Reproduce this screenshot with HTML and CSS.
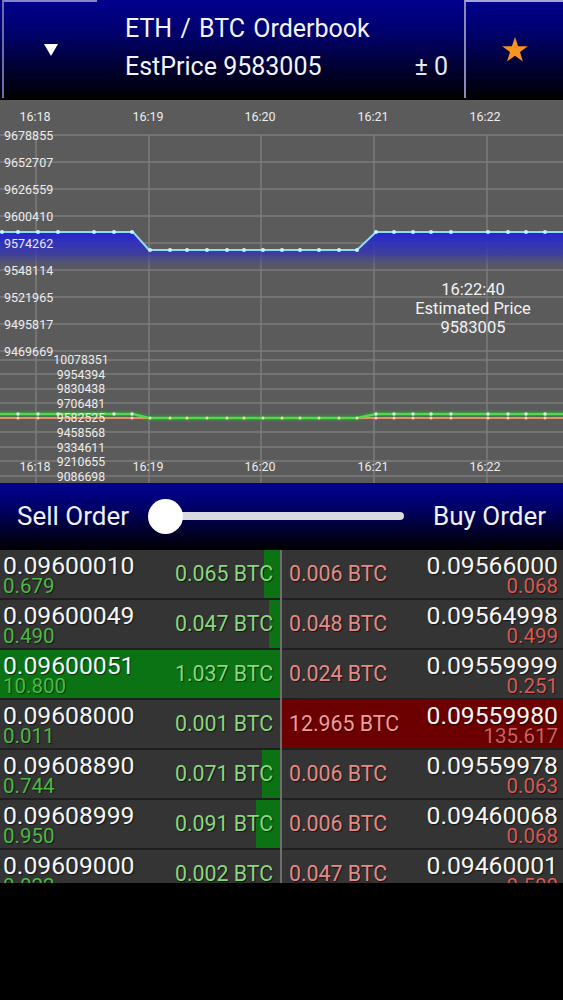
FILE: index.html
```html
<!DOCTYPE html>
<html>
<head>
<meta charset="utf-8">
<title>ETH / BTC Orderbook</title>
<link rel="stylesheet" href="styles.css">
</head>
<body>
<div class="app">
  <header class="topbar">
    <div class="menu-btn">
      <svg class="tri" width="14" height="12" viewBox="0 0 14 12"><polygon points="0,0 14,0 7,12"/></svg>
    </div>
    <div class="title-area">
      <div class="title">ETH / BTC Orderbook</div>
      <div class="subline"><span>EstPrice 9583005</span><span class="delta">± 0</span></div>
    </div>
    <div class="fav-btn">
      <svg class="star" width="28" height="28" viewBox="0 0 28 28"><polygon points="14,1 17.1,10.2 26.8,10.3 19,16.1 21.9,25.4 14,19.8 6.1,25.4 9,16.1 1.2,10.3 10.9,10.2"/></svg>
    </div>
  </header>

  <section class="chart">
    <svg class="chart-svg" width="563" height="383" viewBox="0 0 563 383">
      <defs>
        <linearGradient id="fillg" x1="0" y1="132" x2="0" y2="172" gradientUnits="userSpaceOnUse">
          <stop offset="0" stop-color="#2424d4"/>
          <stop offset="0.55" stop-color="#3434b4" stop-opacity="0.75"/>
          <stop offset="1" stop-color="#5b5b6e" stop-opacity="0"/>
        </linearGradient>
      </defs>
      <g class="grid">
        <line x1="0" y1="35" x2="563" y2="35"/>
        <line x1="0" y1="62" x2="563" y2="62"/>
        <line x1="0" y1="89" x2="563" y2="89"/>
        <line x1="0" y1="116" x2="563" y2="116"/>
        <line x1="0" y1="143" x2="563" y2="143"/>
        <line x1="0" y1="170" x2="563" y2="170"/>
        <line x1="0" y1="197" x2="563" y2="197"/>
        <line x1="0" y1="224" x2="563" y2="224"/>
        <line x1="0" y1="251" x2="563" y2="251"/>
        <line x1="0" y1="260" x2="563" y2="260"/>
        <line x1="0" y1="274" x2="563" y2="274"/>
        <line x1="0" y1="289" x2="563" y2="289"/>
        <line x1="0" y1="303" x2="563" y2="303"/>
        <line x1="0" y1="318" x2="563" y2="318"/>
        <line x1="0" y1="332" x2="563" y2="332"/>
        <line x1="0" y1="347" x2="563" y2="347"/>
        <line x1="0" y1="361" x2="563" y2="361"/>
        <line x1="0" y1="376" x2="563" y2="376"/>
        <line x1="36" y1="35" x2="36" y2="383"/>
        <line x1="149" y1="35" x2="149" y2="383"/>
        <line x1="261" y1="35" x2="261" y2="383"/>
        <line x1="374" y1="35" x2="374" y2="383"/>
        <line x1="487" y1="35" x2="487" y2="383"/>
      </g>

      <polygon class="area" points="0,132 133,132 149,150 357,150 376,132 563,132 563,172 0,172"/>
      <polyline class="price-line" points="0,132 133,132 149,150 357,150 376,132 563,132"/>
      <g class="dots-blue">
        <circle cx="2" cy="132" r="2"/><circle cx="18" cy="132" r="2"/><circle cx="38" cy="132" r="2"/><circle cx="58" cy="132" r="2"/><circle cx="94" cy="132" r="2"/><circle cx="114" cy="132" r="2"/><circle cx="132" cy="132" r="2"/>
        <circle cx="150" cy="150" r="2"/><circle cx="170" cy="150" r="2"/><circle cx="187" cy="150" r="2"/><circle cx="207" cy="150" r="2"/><circle cx="227" cy="150" r="2"/><circle cx="244" cy="150" r="2"/><circle cx="263" cy="150" r="2"/><circle cx="282" cy="150" r="2"/><circle cx="300" cy="150" r="2"/><circle cx="319" cy="150" r="2"/><circle cx="339" cy="150" r="2"/><circle cx="357" cy="150" r="2"/>
        <circle cx="376" cy="132" r="2"/><circle cx="394" cy="132" r="2"/><circle cx="413" cy="132" r="2"/><circle cx="431" cy="132" r="2"/><circle cx="451" cy="132" r="2"/><circle cx="488" cy="132" r="2"/><circle cx="508" cy="132" r="2"/><circle cx="526" cy="132" r="2"/><circle cx="545" cy="132" r="2"/>
      </g>

      <g class="lbl">
        <text x="35" y="16" text-anchor="middle">16:18</text>
        <text x="148" y="16" text-anchor="middle">16:19</text>
        <text x="260" y="16" text-anchor="middle">16:20</text>
        <text x="373" y="16" text-anchor="middle">16:21</text>
        <text x="485" y="16" text-anchor="middle">16:22</text>
        <text x="4" y="35">9678855</text>
        <text x="4" y="62">9652707</text>
        <text x="4" y="89">9626559</text>
        <text x="4" y="116">9600410</text>
        <text x="4" y="143">9574262</text>
        <text x="4" y="170">9548114</text>
        <text x="4" y="197">9521965</text>
        <text x="4" y="224">9495817</text>
        <text x="4" y="251">9469669</text>
      </g>
      <g class="tip">
        <text x="473" y="189" text-anchor="middle">16:22:40</text>
        <text x="473" y="208" text-anchor="middle">Estimated Price</text>
        <text x="473" y="227" text-anchor="middle">9583005</text>
      </g>

      <polyline class="green-band" points="0,314 133,314 149,318 357,318 376,314 563,314"/>
      <polyline class="orange-line" points="0,318 563,318"/>
      <polyline class="green-line" points="0,314 133,314 149,318 357,318 376,314 563,314"/>
      <g class="dots-green">
        <circle cx="18" cy="314" r="1.7"/><circle cx="38" cy="314" r="1.7"/><circle cx="58" cy="314" r="1.7"/><circle cx="114" cy="314" r="1.7"/><circle cx="132" cy="314" r="1.7"/>
        <circle cx="376" cy="314" r="1.7"/><circle cx="394" cy="314" r="1.7"/><circle cx="413" cy="314" r="1.7"/><circle cx="431" cy="314" r="1.7"/><circle cx="451" cy="314" r="1.7"/><circle cx="488" cy="314" r="1.7"/><circle cx="508" cy="314" r="1.7"/><circle cx="526" cy="314" r="1.7"/><circle cx="545" cy="314" r="1.7"/>
      </g>
      <g class="dots-orange">
        <circle cx="18" cy="318" r="1.5"/><circle cx="38" cy="318" r="1.5"/><circle cx="132" cy="318" r="1.5"/>
        <circle cx="150" cy="318" r="1.5"/><circle cx="170" cy="318" r="1.5"/><circle cx="187" cy="318" r="1.5"/><circle cx="207" cy="318" r="1.5"/><circle cx="227" cy="318" r="1.5"/><circle cx="244" cy="318" r="1.5"/><circle cx="263" cy="318" r="1.5"/><circle cx="282" cy="318" r="1.5"/><circle cx="300" cy="318" r="1.5"/><circle cx="319" cy="318" r="1.5"/><circle cx="339" cy="318" r="1.5"/><circle cx="357" cy="318" r="1.5"/>
        <circle cx="376" cy="318" r="1.5"/><circle cx="394" cy="318" r="1.5"/><circle cx="413" cy="318" r="1.5"/><circle cx="431" cy="318" r="1.5"/><circle cx="451" cy="318" r="1.5"/><circle cx="488" cy="318" r="1.5"/><circle cx="508" cy="318" r="1.5"/><circle cx="526" cy="318" r="1.5"/><circle cx="545" cy="318" r="1.5"/>
      </g>

      <g class="lbl small">
        <text x="81" y="260" text-anchor="middle">10078351</text>
        <text x="81" y="275" text-anchor="middle">9954394</text>
        <text x="81" y="289" text-anchor="middle">9830438</text>
        <text x="81" y="304" text-anchor="middle">9706481</text>
        <text x="81" y="318" text-anchor="middle">9582525</text>
        <text x="81" y="333" text-anchor="middle">9458568</text>
        <text x="81" y="348" text-anchor="middle">9334611</text>
        <text x="81" y="362" text-anchor="middle">9210655</text>
        <text x="81" y="377" text-anchor="middle">9086698</text>
      </g>
      <g class="lbl">
        <text x="35" y="366" text-anchor="middle">16:18</text>
        <text x="148" y="366" text-anchor="middle">16:19</text>
        <text x="260" y="366" text-anchor="middle">16:20</text>
        <text x="373" y="366" text-anchor="middle">16:21</text>
        <text x="485" y="366" text-anchor="middle">16:22</text>
      </g>
    </svg>
  </section>

  <section class="slider-bar">
    <span class="side-label">Sell Order</span>
    <div class="slider">
      <span class="knob"></span>
      <span class="track"></span>
    </div>
    <span class="side-label buy-label">Buy Order</span>
  </section>

  <section class="book">
    <div class="cell buy" style="--w:16px"><div class="px"><div class="price">0.09600010</div><div class="qty">0.679</div></div><div class="amt">0.065 BTC</div></div>
    <div class="cell sell"><div class="amt">0.006 BTC</div><div class="px"><div class="price">0.09566000</div><div class="qty">0.068</div></div></div>

    <div class="cell buy" style="--w:11px"><div class="px"><div class="price">0.09600049</div><div class="qty">0.490</div></div><div class="amt">0.047 BTC</div></div>
    <div class="cell sell"><div class="amt">0.048 BTC</div><div class="px"><div class="price">0.09564998</div><div class="qty">0.499</div></div></div>

    <div class="cell buy full"><div class="px"><div class="price">0.09600051</div><div class="qty">10.800</div></div><div class="amt">1.037 BTC</div></div>
    <div class="cell sell"><div class="amt">0.024 BTC</div><div class="px"><div class="price">0.09559999</div><div class="qty">0.251</div></div></div>

    <div class="cell buy"><div class="px"><div class="price">0.09608000</div><div class="qty">0.011</div></div><div class="amt">0.001 BTC</div></div>
    <div class="cell sell full"><div class="amt">12.965 BTC</div><div class="px"><div class="price">0.09559980</div><div class="qty">135.617</div></div></div>

    <div class="cell buy" style="--w:18px"><div class="px"><div class="price">0.09608890</div><div class="qty">0.744</div></div><div class="amt">0.071 BTC</div></div>
    <div class="cell sell"><div class="amt">0.006 BTC</div><div class="px"><div class="price">0.09559978</div><div class="qty">0.063</div></div></div>

    <div class="cell buy" style="--w:24px"><div class="px"><div class="price">0.09608999</div><div class="qty">0.950</div></div><div class="amt">0.091 BTC</div></div>
    <div class="cell sell"><div class="amt">0.006 BTC</div><div class="px"><div class="price">0.09460068</div><div class="qty">0.068</div></div></div>

    <div class="cell buy"><div class="px"><div class="price">0.09609000</div><div class="qty">0.022</div></div><div class="amt">0.002 BTC</div></div>
    <div class="cell sell"><div class="amt">0.047 BTC</div><div class="px"><div class="price">0.09460001</div><div class="qty">0.500</div></div></div>
  </section>
</div>
</body>
</html>
```

FILE: styles.css
```css
html, body {
  margin: 0;
  padding: 0;
  background: #000;
}
body {
  width: 563px;
  height: 1000px;
  overflow: hidden;
  font-family: Roboto, "Liberation Sans", sans-serif;
  color: #fff;
}

/* ---------- header ---------- */
.topbar {
  display: flex;
  height: 98px;
  background: linear-gradient(#00008e 0%, #00006a 35%, #000030 70%, #000004 100%);
}
.menu-btn {
  width: 95px;
  margin-left: 2px;
  box-sizing: border-box;
  border-left: 2px solid #6c6ca6;
  border-top: 2px solid #8686c4;
  display: flex;
  align-items: center;
  justify-content: center;
}
.tri {
  display: block;
  fill: #ffffff;
}
.title-area {
  flex: 1;
  padding: 10px 16px 0 28px;
  display: flex;
  flex-direction: column;
}
.title,
.subline {
  font-size: 25px;
  line-height: 38px;
  color: #f4f4f8;
}
.title {
  word-spacing: 2px;
}
.subline {
  display: flex;
  justify-content: space-between;
}
.delta {
  color: #e6e6ee;
}
.fav-btn {
  width: 99px;
  box-sizing: border-box;
  border-left: 2px solid #8a8ab8;
  border-top: 2px solid #a4a4d6;
  display: flex;
  align-items: center;
  justify-content: center;
}
.star {
  display: block;
  fill: #f7931e;
}

/* ---------- chart ---------- */
.chart {
  margin-top: 2px;
  height: 383px;
  background: #5b5b5b;
}
.chart-svg {
  display: block;
}
.grid line {
  stroke: #7b7b7b;
  stroke-width: 1.5;
}
.area {
  fill: url(#fillg);
}
.price-line {
  fill: none;
  stroke: #8fdcf2;
  stroke-width: 2;
}
.dots-blue circle {
  fill: #c8f4ff;
}
.lbl text {
  font-family: Roboto, "Liberation Sans", sans-serif;
  font-size: 12.5px;
  fill: #ececec;
  dominant-baseline: central;
}
.lbl.small text {
  font-size: 12.3px;
}
.tip text {
  font-family: Roboto, "Liberation Sans", sans-serif;
  font-size: 16.5px;
  fill: #f2f2f2;
  dominant-baseline: central;
}
.green-band {
  fill: none;
  stroke: #3d8a3d;
  stroke-width: 7;
  opacity: 0.55;
}
.green-line {
  fill: none;
  stroke: #4fd94f;
  stroke-width: 2.5;
}
.orange-line {
  fill: none;
  stroke: #e8906c;
  stroke-width: 1.8;
}
.dots-green circle {
  fill: #d8ffe0;
}
.dots-orange circle {
  fill: #ffd2bc;
}

/* ---------- slider ---------- */
.slider-bar {
  height: 66px;
  display: flex;
  align-items: center;
  padding: 0 17px;
  background: linear-gradient(#000090 0%, #00006c 35%, #000030 70%, #000004 100%);
}
.side-label {
  font-size: 26px;
  color: #f0f0f6;
}
.buy-label {
  margin-left: auto;
}
.slider {
  width: 256px;
  margin-left: 19px;
  display: flex;
  align-items: center;
}
.knob {
  position: relative;
  z-index: 1;
  width: 35px;
  height: 35px;
  border-radius: 50%;
  background: #ffffff;
  flex: none;
}
.track {
  flex: 1;
  height: 8px;
  margin-left: -18px;
  border-radius: 4px;
  background: #d9d9e0;
}

/* ---------- order book ---------- */
.book {
  margin-top: 1px;
  height: 333px;
  overflow: hidden;
  display: grid;
  grid-template-columns: 280px 281px;
  column-gap: 2px;
  align-content: start;
  background: #6e6e6e;
}
.cell {
  height: 50px;
  box-sizing: border-box;
  border-bottom: 2px solid #1f1f1f;
  display: flex;
  justify-content: space-between;
  text-shadow: 1px 1px 1px rgba(0, 0, 0, 0.6);
}
.cell.buy {
  background: linear-gradient(to left, #0b7314 var(--w, 0px), #343434 0);
}
.cell.sell {
  background: #343434;
}
.cell.buy.full {
  background: #0b7314;
}
.cell.sell.full {
  background: #6c0000;
}
.px {
  padding-top: 5px;
}
.buy .px {
  padding-left: 3px;
}
.sell .px {
  padding-right: 5px;
  text-align: right;
}
.price {
  font-size: 24.7px;
  line-height: 22px;
  color: #f6f6f6;
}
.qty {
  font-size: 20.5px;
  line-height: 18px;
}
.amt {
  align-self: center;
  font-size: 21.3px;
  line-height: 24px;
}
.buy .amt {
  padding-right: 7px;
  color: #88d87e;
}
.buy .qty {
  color: #4db847;
}
.sell .amt {
  padding-left: 7px;
  color: #e68a86;
}
.sell .qty {
  color: #d65a56;
}
.sell.full .amt {
  color: #f29a96;
}
.sell.full .qty {
  color: #d06060;
}
```
